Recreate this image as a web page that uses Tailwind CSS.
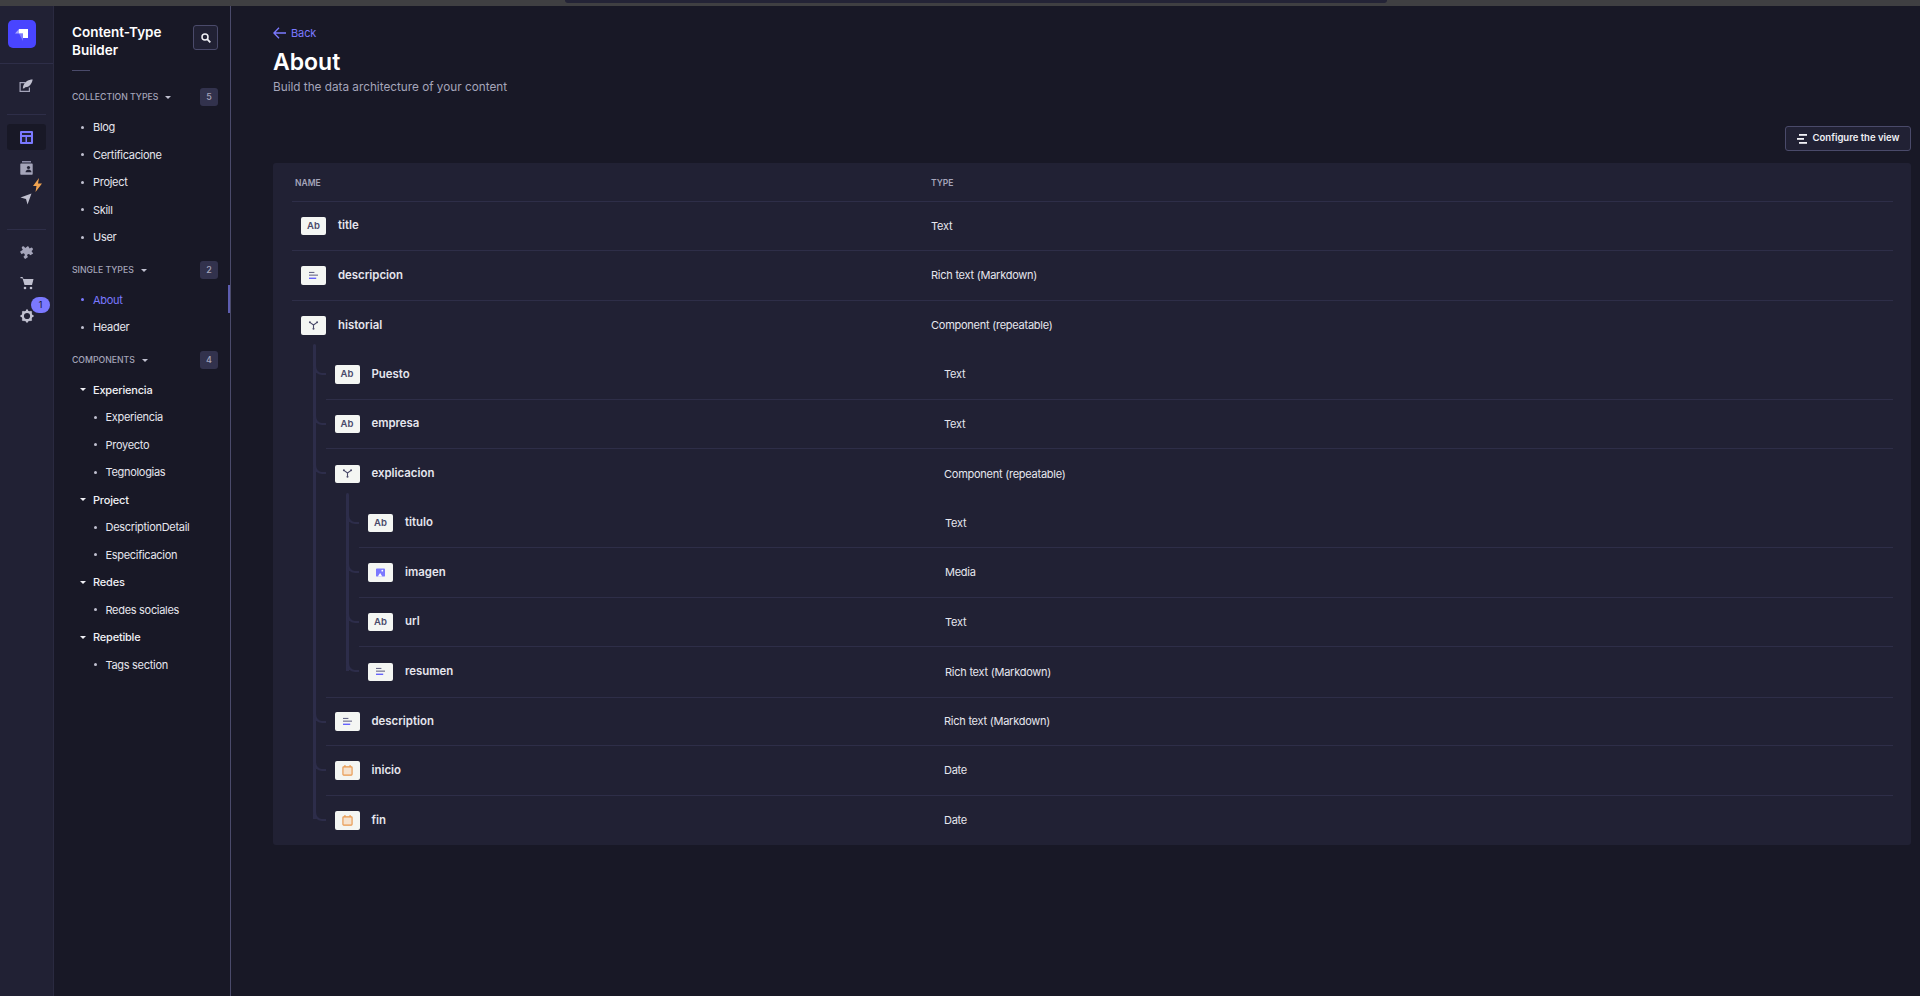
<!DOCTYPE html>
<html lang="en">
<head>
    <meta charset="UTF-8">
    <meta name="viewport" content="width=device-width, initial-scale=1.0">
    <title>Content-Type Builder</title>
    <script src="https://cdn.jsdelivr.net/npm/@tailwindcss/browser@4"></script>
</head>
<body class="bg-[#181826] h-[996px] overflow-hidden flex flex-col font-['Inter',sans-serif] text-[#e6e6ee]">
    <svg class="hidden">
        <symbol id="i-rich" viewBox="0 0 12 10"><rect x="1" y="1" width="6" height="1.2" fill="#666687"/><rect x="1" y="4" width="10" height="1.2" fill="#666687"/><rect x="1" y="7.4" width="8" height="1.3" fill="#4945ff"/></symbol>
        <symbol id="i-comp" viewBox="0 0 12 10"><path d="M2 1.500 6 4.500 10 1.500M6 4.500V8" fill="none" stroke="#4a4a6a" stroke-width="1.200"/><circle cx="2" cy="1.500" r="1.100" fill="#4a4a6a"/><circle cx="10" cy="1.500" r="1.100" fill="#4a4a6a"/><circle cx="6" cy="8.500" r="1.100" fill="#4a4a6a"/></symbol>
        <symbol id="i-media" viewBox="0 0 12 10"><path d="M2 .5h8a1 1 0 0 1 1 1v7a1 1 0 0 1-1 1H1.500a.5.5 0 0 1-.5-.5v-7.500a1 1 0 0 1 1-1z" fill="#7b79ff"/><circle cx="8" cy="3" r="1" fill="#fff"/><path d="M3 9.500 5.600 5.600 8 9.500z" fill="#fff"/></symbol>
        <symbol id="i-date" viewBox="0 0 12 12"><path d="M3.200 0v2.500M8.800 0v2.500" stroke="#e8964a" stroke-width="1.200"/><rect x="1" y="2" width="10" height="9" rx=".8" fill="#f6e3cf" stroke="#e8964a" stroke-width="1.200"/></symbol>
    </svg>

    <div class="relative h-[6px] shrink-0 bg-[#3f3f42]">
        <div class="absolute left-[565px] top-0 w-[822px] h-[3px] bg-[#232336] rounded-b-[3px]"></div>
    </div>

    <div class="flex flex-1 min-h-0">
        <nav class="w-[54px] shrink-0 bg-[#212134] border-r border-[#2a2a40] flex flex-col">
            <div class="h-[58px] shrink-0 border-b border-[#2e2e48] pt-[14px] pl-[8px]">
                <div class="w-[28px] h-[28px] rounded-[5px] bg-[#4945ff] flex items-center justify-center">
                    <svg width="16" height="16" viewBox="0 0 16 16"><path d="M5 3h9v9H9V7.500H5z" fill="#fff"/><path d="M1 7.500 5 3v4.500z" fill="#a9a7ff"/><path d="M9 12v3l-4-7.500h4z" fill="#a9a7ff" opacity=".55"/></svg>
                </div>
            </div>
            <div class="h-[43px] flex items-center justify-center pr-[1px]">
                <svg width="14" height="14" viewBox="0 0 14 14"><path d="M.5 3H6v1.200H1.700v7.600h8.100V8.500H11v4.500H.5z" fill="#a5a5ba"/><path d="M13.700.5C9.500.5 4.500 2.500 3.800 9.500l1.500-.2.900-1.100c3.500.3 6.500-2.700 7.500-7.700z" fill="#c0c0cf"/></svg>
            </div>
            <div class="h-px mx-[7px] bg-[#2e2e48] mt-[7px]"></div>
            <div class="h-[26px] mx-[7px] mt-[9px] rounded-[3px] bg-[#181826] flex items-center justify-center">
                <svg width="13" height="13" viewBox="0 0 13 13"><rect width="13" height="13" rx="1" fill="#7b79ff"/><rect x="2" y="2" width="9" height="2" fill="#212134"/><rect x="2" y="6" width="3.500" height="5" fill="#212134"/><rect x="7" y="6" width="4" height="5" fill="#212134"/></svg>
            </div>
            <div class="relative h-[31px] mt-[2px] flex items-center justify-center">
                <svg width="13" height="14" viewBox="0 0 13 14"><rect x="2" y="0" width="9" height="1.500" fill="#8e8ea9"/><path d="M1 2.500h11a.7.7 0 0 1 .7.7v9.800a.7.7 0 0 1-.7.7H1a.7.7 0 0 1-.7-.7V3.200a.7.7 0 0 1 .7-.7z" fill="#a5a5ba"/><circle cx="8.500" cy="6.500" r="1.600" fill="#212134"/><path d="M5.500 11.200c.3-2 1.500-2.800 3-2.800s2.700.8 3 2.800z" fill="#212134"/></svg>
            </div>
            <div class="relative h-[32px] flex items-center justify-center pr-[1px]">
                <svg width="12" height="12" viewBox="0 0 12 12"><path d="M11.500.5 7.500 11.500 6 6 .5 4.500z" fill="#c0c0cf"/></svg>
                <svg class="absolute left-[33px] top-[-5px]" width="9" height="14" viewBox="0 0 9 14"><path d="M6 0 0 8h3.500L2.500 14 9 5.500H5z" fill="#f0a350"/></svg>
            </div>
            <div class="h-px mx-[7px] bg-[#2e2e48] mt-[14px]"></div>
            <div class="h-[43px] flex items-center justify-center">
                <svg width="14" height="14" viewBox="0 0 14 14"><path d="M5.500 1.500a1.600 1.600 0 0 1 3.200 0V3h3.800v3.300h1a1.700 1.700 0 0 1 0 3.400h-1v3.300H8.700v-1a1.600 1.600 0 0 0-3.200 0v1H1.500V9.700h1a1.700 1.700 0 0 0 0-3.400h-1V3h4z" fill="#a5a5ba" transform="rotate(-35 7 7) scale(.9)"/></svg>
            </div>
            <div class="h-[20px] flex items-center justify-center">
                <svg width="14" height="14" viewBox="0 0 14 14"><path d="M.5 1h2l1 2h10l-1.500 6H4.500L2.500 2.300H.5z" fill="#c0c0cf"/><circle cx="5" cy="12" r="1.300" fill="#c0c0cf"/><circle cx="11" cy="12" r="1.300" fill="#c0c0cf"/></svg>
            </div>
            <div class="relative h-[46px] flex items-center justify-center">
                <svg width="14" height="14" viewBox="0 0 14 14"><circle cx="7" cy="7" r="4.300" fill="none" stroke="#c0c0cf" stroke-width="2.400"/><path d="M7 .5v2M7 11.500v2M.5 7h2M11.500 7h2M2.400 2.400l1.400 1.400M10.200 10.200l1.400 1.400M2.400 11.600l1.400-1.400M10.200 3.800l1.400-1.400" stroke="#c0c0cf" stroke-width="2"/></svg>
                <span class="absolute left-[31px] top-[4px] w-[19px] h-[16px] rounded-full bg-[#7b79ff] text-[9px] text-[#181826] flex items-center justify-center">1</span>
            </div>
        </nav>

        <aside class="relative w-[177px] shrink-0 border-r border-[#4a4a6a] pl-[18px] pr-[12px]">
            <div class="flex justify-between pt-[18px]">
                <h2 class="text-[13.500px] leading-[17.500px] font-semibold text-white">Content-Type<br>Builder</h2>
                <button class="w-[25px] h-[25px] mt-px rounded-[3px] border border-[#4a4a6a] bg-[#212134] flex items-center justify-center">
                    <svg width="10" height="10" viewBox="0 0 10 10"><circle cx="4" cy="4" r="3" fill="none" stroke="#f0f0f5" stroke-width="1.500"/><path d="M6.200 6.200 9.300 9.300" stroke="#f0f0f5" stroke-width="1.800"/></svg>
                </button>
            </div>
            <div class="w-[18px] h-px bg-[#4a4a6a] mt-[11px]"></div>

            <div class="flex items-center justify-between mt-[17px] h-[18px]">
                <div class="flex items-center gap-[7px] pt-[2px] text-[8.700px] font-medium text-[#a5a5ba]">COLLECTION TYPES <span class="w-0 h-0 border-x-[3px] border-t-[3px] border-x-transparent border-t-[#c0c0cf]"></span></div>
                <span class="w-[18px] h-[18px] rounded-[3px] bg-[#32324d] text-[9px] font-medium text-[#a5a5ba] flex items-center justify-center">5</span>
            </div>
            <ul class="mt-[7.500px] text-[11px] tracking-[-.3px]">
                <li class="h-[27.500px] flex items-center gap-[9px] pl-[9px]"><span class="w-[3px] h-[3px] rounded-full bg-[#c0c0cf]"></span>Blog</li>
                <li class="h-[27.500px] flex items-center gap-[9px] pl-[9px]"><span class="w-[3px] h-[3px] rounded-full bg-[#c0c0cf]"></span>Certificacione</li>
                <li class="h-[27.500px] flex items-center gap-[9px] pl-[9px]"><span class="w-[3px] h-[3px] rounded-full bg-[#c0c0cf]"></span>Project</li>
                <li class="h-[27.500px] flex items-center gap-[9px] pl-[9px]"><span class="w-[3px] h-[3px] rounded-full bg-[#c0c0cf]"></span>Skill</li>
                <li class="h-[27.500px] flex items-center gap-[9px] pl-[9px]"><span class="w-[3px] h-[3px] rounded-full bg-[#c0c0cf]"></span>User</li>
            </ul>

            <div class="flex items-center justify-between mt-[9.500px] h-[18px]">
                <div class="flex items-center gap-[7px] pt-[2px] text-[8.700px] font-medium text-[#a5a5ba]">SINGLE TYPES <span class="w-0 h-0 border-x-[3px] border-t-[3px] border-x-transparent border-t-[#c0c0cf]"></span></div>
                <span class="w-[18px] h-[18px] rounded-[3px] bg-[#32324d] text-[9px] font-medium text-[#a5a5ba] flex items-center justify-center">2</span>
            </div>
            <ul class="mt-[7.500px] text-[11px] tracking-[-.3px]">
                <li class="h-[27.500px] flex items-center gap-[9px] pl-[9px] text-[#7b79ff]"><span class="w-[3px] h-[3px] rounded-full bg-[#7b79ff]"></span>About</li>
                <li class="h-[27.500px] flex items-center gap-[9px] pl-[9px]"><span class="w-[3px] h-[3px] rounded-full bg-[#c0c0cf]"></span>Header</li>
            </ul>
            <div class="absolute right-0 top-[279px] w-[2px] h-[28px] bg-[#5d5db0]"></div>

            <div class="flex items-center justify-between mt-[9.500px] h-[18px]">
                <div class="flex items-center gap-[7px] pt-[2px] text-[8.700px] font-medium text-[#a5a5ba]">COMPONENTS <span class="w-0 h-0 border-x-[3px] border-t-[3px] border-x-transparent border-t-[#c0c0cf]"></span></div>
                <span class="w-[18px] h-[18px] rounded-[3px] bg-[#32324d] text-[9px] font-medium text-[#a5a5ba] flex items-center justify-center">4</span>
            </div>
            <ul class="mt-[7.500px] text-[11px] tracking-[-.3px]">
                <li class="h-[27.500px] flex items-center gap-[7px] pl-[8px] font-medium text-[#f0f0f5] tracking-[-.2px]"><span class="w-0 h-0 border-x-[3px] border-t-[3px] border-x-transparent border-t-[#f0f0f5]"></span>Experiencia</li>
                <li class="h-[27.500px] flex items-center gap-[8.500px] pl-[22px]"><span class="w-[3px] h-[3px] rounded-full bg-[#c0c0cf]"></span>Experiencia</li>
                <li class="h-[27.500px] flex items-center gap-[8.500px] pl-[22px]"><span class="w-[3px] h-[3px] rounded-full bg-[#c0c0cf]"></span>Proyecto</li>
                <li class="h-[27.500px] flex items-center gap-[8.500px] pl-[22px]"><span class="w-[3px] h-[3px] rounded-full bg-[#c0c0cf]"></span>Tegnologias</li>
                <li class="h-[27.500px] flex items-center gap-[7px] pl-[8px] font-medium text-[#f0f0f5] tracking-[-.2px]"><span class="w-0 h-0 border-x-[3px] border-t-[3px] border-x-transparent border-t-[#f0f0f5]"></span>Project</li>
                <li class="h-[27.500px] flex items-center gap-[8.500px] pl-[22px]"><span class="w-[3px] h-[3px] rounded-full bg-[#c0c0cf]"></span>DescriptionDetail</li>
                <li class="h-[27.500px] flex items-center gap-[8.500px] pl-[22px]"><span class="w-[3px] h-[3px] rounded-full bg-[#c0c0cf]"></span>Especificacion</li>
                <li class="h-[27.500px] flex items-center gap-[7px] pl-[8px] font-medium text-[#f0f0f5] tracking-[-.2px]"><span class="w-0 h-0 border-x-[3px] border-t-[3px] border-x-transparent border-t-[#f0f0f5]"></span>Redes</li>
                <li class="h-[27.500px] flex items-center gap-[8.500px] pl-[22px]"><span class="w-[3px] h-[3px] rounded-full bg-[#c0c0cf]"></span>Redes sociales</li>
                <li class="h-[27.500px] flex items-center gap-[7px] pl-[8px] font-medium text-[#f0f0f5] tracking-[-.2px]"><span class="w-0 h-0 border-x-[3px] border-t-[3px] border-x-transparent border-t-[#f0f0f5]"></span>Repetible</li>
                <li class="h-[27.500px] flex items-center gap-[8.500px] pl-[22px]"><span class="w-[3px] h-[3px] rounded-full bg-[#c0c0cf]"></span>Tags section</li>
            </ul>
        </aside>

        <main class="flex-1 pl-[42px] pr-[9px] pt-[20px]">
            <a class="flex items-center gap-[5px] h-[14px] text-[11px] tracking-[-.1px] text-[#7b79ff]">
                <svg width="13" height="12" viewBox="0 0 13 12"><path d="M6 .8.900 6 6 11.200M1 6h12" fill="none" stroke="#7b79ff" stroke-width="1.300"/></svg>
                Back
            </a>
            <h1 class="text-[23px] leading-[30px] font-semibold text-white mt-[7px]">About</h1>
            <p class="text-[11.750px] leading-[16px] text-[#a5a5ba] mt-[2px]">Build the data architecture of your content</p>

            <div class="flex justify-end mt-[31px]">
                <button class="h-[25px] w-[126px] rounded-[3px] border border-[#4a4a6a] bg-[#212134] flex items-center justify-center gap-[6px] text-[9.500px] font-semibold text-[#f0f0f5]">
                    <svg width="10" height="10" viewBox="0 0 10 10"><rect x="2" y="0" width="8" height="1.800" fill="#f0f0f5"/><rect y="4" width="7" height="1.800" fill="#f0f0f5"/><rect x="2" y="8" width="8" height="1.800" fill="#f0f0f5"/></svg>
                    Configure the view
                </button>
            </div>

            <div class="mt-[12px] rounded-[3px] bg-[#212134] pl-[19px] pr-[18px] h-[682px] text-[11px] tracking-[-.25px]">
                <div class="flex items-center h-[38.600px] pt-[3px] border-b border-[#2e2e48] text-[8.500px] font-semibold tracking-normal text-[#a5a5ba]">
                    <span class="w-[639px] pl-[3px]">NAME</span><span>TYPE</span>
                </div>

                <div class="flex items-center h-[49.500px] border-b border-[#2e2e48]">
                    <div class="w-[639px] pl-[9px] flex items-center gap-[12px]"><span class="w-[25px] h-[18.500px] rounded-[2px] bg-[#f4f6f3] text-[9.500px] tracking-normal font-semibold text-[#4a4a6a] flex items-center justify-center">Ab</span><span class="text-[11.400px] tracking-normal font-semibold">title</span></div>
                    <span>Text</span>
                </div>
                <div class="flex items-center h-[49.500px] border-b border-[#2e2e48]">
                    <div class="w-[639px] pl-[9px] flex items-center gap-[12px]"><span class="w-[25px] h-[18.500px] rounded-[2px] bg-[#f4f6f3] flex items-center justify-center"><svg width="11" height="9"><use href="#i-rich"/></svg></span><span class="text-[11.400px] tracking-normal font-semibold">descripcion</span></div>
                    <span>Rich text (Markdown)</span>
                </div>
                <div class="flex items-center h-[49.500px]">
                    <div class="w-[639px] pl-[9px] flex items-center gap-[12px]"><span class="w-[25px] h-[18.500px] rounded-[2px] bg-[#f4f6f3] flex items-center justify-center"><svg width="11" height="9"><use href="#i-comp"/></svg></span><span class="text-[11.400px] tracking-normal font-semibold">historial</span></div>
                    <span>Component (repeatable)</span>
                </div>

                <div class="relative ml-[33.500px]">
                    <div class="absolute left-[-13px] top-[-6px] bottom-[26px] w-[3px] rounded-t-[2px] bg-[#2d2d4a]"></div>

                    <div class="relative flex items-center h-[49.500px] border-b border-[#2e2e48]">
                        <span class="absolute left-[-13px] top-[15px] w-[13px] h-[10px] border-l-[3px] border-b-[2px] border-[#2d2d4a] rounded-bl-[9px]"></span>
                        <div class="w-[618.500px] pl-[9px] flex items-center gap-[12px]"><span class="w-[25px] h-[18.500px] rounded-[2px] bg-[#f4f6f3] text-[9.500px] tracking-normal font-semibold text-[#4a4a6a] flex items-center justify-center">Ab</span><span class="text-[11.400px] tracking-normal font-semibold">Puesto</span></div>
                        <span>Text</span>
                    </div>
                    <div class="relative flex items-center h-[49.500px] border-b border-[#2e2e48]">
                        <span class="absolute left-[-13px] top-[15px] w-[13px] h-[10px] border-l-[3px] border-b-[2px] border-[#2d2d4a] rounded-bl-[9px]"></span>
                        <div class="w-[618.500px] pl-[9px] flex items-center gap-[12px]"><span class="w-[25px] h-[18.500px] rounded-[2px] bg-[#f4f6f3] text-[9.500px] tracking-normal font-semibold text-[#4a4a6a] flex items-center justify-center">Ab</span><span class="text-[11.400px] tracking-normal font-semibold">empresa</span></div>
                        <span>Text</span>
                    </div>
                    <div class="relative flex items-center h-[49.500px]">
                        <span class="absolute left-[-13px] top-[15px] w-[13px] h-[10px] border-l-[3px] border-b-[2px] border-[#2d2d4a] rounded-bl-[9px]"></span>
                        <div class="w-[618.500px] pl-[9px] flex items-center gap-[12px]"><span class="w-[25px] h-[18.500px] rounded-[2px] bg-[#f4f6f3] flex items-center justify-center"><svg width="11" height="9"><use href="#i-comp"/></svg></span><span class="text-[11.400px] tracking-normal font-semibold">explicacion</span></div>
                        <span>Component (repeatable)</span>
                    </div>

                    <div class="relative ml-[33.500px]">
                        <div class="absolute left-[-13px] top-[-6px] bottom-[26px] w-[3px] rounded-t-[2px] bg-[#2d2d4a]"></div>

                        <div class="relative flex items-center h-[49.500px] border-b border-[#2e2e48]">
                            <span class="absolute left-[-13px] top-[15px] w-[13px] h-[10px] border-l-[3px] border-b-[2px] border-[#2d2d4a] rounded-bl-[9px]"></span>
                            <div class="w-[586px] pl-[9px] flex items-center gap-[12px]"><span class="w-[25px] h-[18.500px] rounded-[2px] bg-[#f4f6f3] text-[9.500px] tracking-normal font-semibold text-[#4a4a6a] flex items-center justify-center">Ab</span><span class="text-[11.400px] tracking-normal font-semibold">titulo</span></div>
                            <span>Text</span>
                        </div>
                        <div class="relative flex items-center h-[49.500px] border-b border-[#2e2e48]">
                            <span class="absolute left-[-13px] top-[15px] w-[13px] h-[10px] border-l-[3px] border-b-[2px] border-[#2d2d4a] rounded-bl-[9px]"></span>
                            <div class="w-[586px] pl-[9px] flex items-center gap-[12px]"><span class="w-[25px] h-[18.500px] rounded-[2px] bg-[#f4f6f3] flex items-center justify-center"><svg width="11" height="9"><use href="#i-media"/></svg></span><span class="text-[11.400px] tracking-normal font-semibold">imagen</span></div>
                            <span>Media</span>
                        </div>
                        <div class="relative flex items-center h-[49.500px] border-b border-[#2e2e48]">
                            <span class="absolute left-[-13px] top-[15px] w-[13px] h-[10px] border-l-[3px] border-b-[2px] border-[#2d2d4a] rounded-bl-[9px]"></span>
                            <div class="w-[586px] pl-[9px] flex items-center gap-[12px]"><span class="w-[25px] h-[18.500px] rounded-[2px] bg-[#f4f6f3] text-[9.500px] tracking-normal font-semibold text-[#4a4a6a] flex items-center justify-center">Ab</span><span class="text-[11.400px] tracking-normal font-semibold">url</span></div>
                            <span>Text</span>
                        </div>
                        <div class="relative flex items-center h-[49.500px]">
                            <span class="absolute left-[-13px] top-[15px] w-[13px] h-[10px] border-l-[3px] border-b-[2px] border-[#2d2d4a] rounded-bl-[9px]"></span>
                            <div class="w-[586px] pl-[9px] flex items-center gap-[12px]"><span class="w-[25px] h-[18.500px] rounded-[2px] bg-[#f4f6f3] flex items-center justify-center"><svg width="11" height="9"><use href="#i-rich"/></svg></span><span class="text-[11.400px] tracking-normal font-semibold">resumen</span></div>
                            <span>Rich text (Markdown)</span>
                        </div>
                    </div>

                    <div class="relative flex items-center h-[49.500px] border-y border-[#2e2e48]">
                        <span class="absolute left-[-13px] top-[15px] w-[13px] h-[10px] border-l-[3px] border-b-[2px] border-[#2d2d4a] rounded-bl-[9px]"></span>
                        <div class="w-[618.500px] pl-[9px] flex items-center gap-[12px]"><span class="w-[25px] h-[18.500px] rounded-[2px] bg-[#f4f6f3] flex items-center justify-center"><svg width="11" height="9"><use href="#i-rich"/></svg></span><span class="text-[11.400px] tracking-normal font-semibold">description</span></div>
                        <span>Rich text (Markdown)</span>
                    </div>
                    <div class="relative flex items-center h-[49.500px] border-b border-[#2e2e48]">
                        <span class="absolute left-[-13px] top-[15px] w-[13px] h-[10px] border-l-[3px] border-b-[2px] border-[#2d2d4a] rounded-bl-[9px]"></span>
                        <div class="w-[618.500px] pl-[9px] flex items-center gap-[12px]"><span class="w-[25px] h-[18.500px] rounded-[2px] bg-[#f4f6f3] flex items-center justify-center"><svg width="11" height="11"><use href="#i-date"/></svg></span><span class="text-[11.400px] tracking-normal font-semibold">inicio</span></div>
                        <span>Date</span>
                    </div>
                    <div class="relative flex items-center h-[49.500px]">
                        <span class="absolute left-[-13px] top-[15px] w-[13px] h-[10px] border-l-[3px] border-b-[2px] border-[#2d2d4a] rounded-bl-[9px]"></span>
                        <div class="w-[618.500px] pl-[9px] flex items-center gap-[12px]"><span class="w-[25px] h-[18.500px] rounded-[2px] bg-[#f4f6f3] flex items-center justify-center"><svg width="11" height="11"><use href="#i-date"/></svg></span><span class="text-[11.400px] tracking-normal font-semibold">fin</span></div>
                        <span>Date</span>
                    </div>
                </div>
            </div>
        </main>
    </div>
</body>
</html>
